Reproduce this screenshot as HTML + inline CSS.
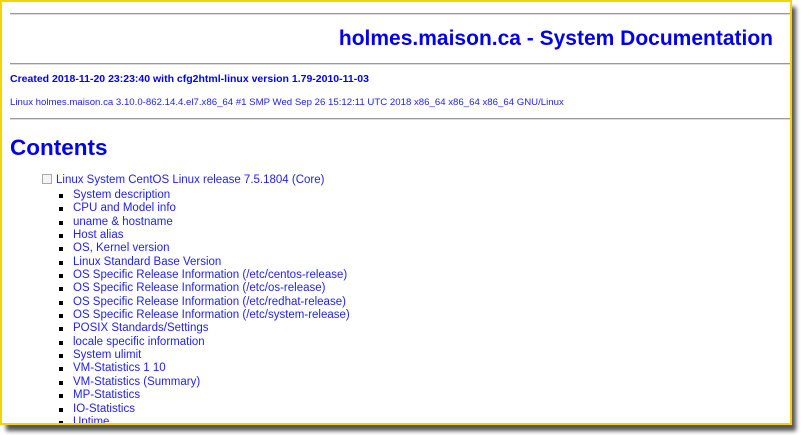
<!DOCTYPE html>
<html><head><style>
html,body{margin:0;padding:0;width:801px;height:435px;overflow:hidden;background:#fff;font-family:"Liberation Sans",Arial,sans-serif;}
#shadow{position:absolute;left:6px;top:7px;width:790px;height:424px;background:#555;filter:blur(2px);}
#frame{position:absolute;left:0;top:0;width:788px;height:421px;border:2px solid #f5d400;background:#fff;overflow:hidden;}
.hr{position:absolute;left:8px;right:0;height:0;border-top:1px solid #999;border-bottom:1px solid #ddd;}
.t{position:absolute;color:#0000ee;white-space:nowrap;}
ul{margin:0;padding:0;list-style:none;}
li{position:relative;height:13.35px;line-height:13.35px;font-size:11.5px;color:#2222ee;}
li:before{content:"";position:absolute;left:-14px;top:5px;width:4px;height:4px;background:#000;}
</style></head><body>
<div id="shadow"></div>
<div id="frame">
<div class="hr" style="top:11px"></div>
<div class="t" style="right:17px;top:25px;font-size:21px;font-weight:bold;">holmes.maison.ca - System Documentation</div>
<div class="hr" style="top:61px"></div>
<div class="t" style="left:8px;top:71px;font-size:10.5px;font-weight:bold;">Created 2018-11-20 23:23:40 with cfg2html-linux version 1.79-2010-11-03</div>
<div class="t" style="left:8px;top:95px;font-size:9.65px;color:#2222ee;">Linux holmes.maison.ca 3.10.0-862.14.4.el7.x86_64 #1 SMP Wed Sep 26 15:12:11 UTC 2018 x86_64 x86_64 x86_64 GNU/Linux</div>
<div class="hr" style="top:116px"></div>
<div class="t" style="left:8px;top:133px;font-size:22.5px;font-weight:bold;">Contents</div>
<div style="position:absolute;left:40px;top:172px;width:8px;height:8px;border:1px solid #aaa;background:#f4f4f4;"></div>
<div class="t" style="left:54px;top:172px;font-size:11.5px;color:#2222ee;">Linux System CentOS Linux release 7.5.1804 (Core)</div>
<ul style="position:absolute;left:71px;top:187px;">
<li>System description</li><li>CPU and Model info</li><li>uname &amp; hostname</li><li>Host alias</li><li>OS, Kernel version</li><li>Linux Standard Base Version</li><li>OS Specific Release Information (/etc/centos-release)</li><li>OS Specific Release Information (/etc/os-release)</li><li>OS Specific Release Information (/etc/redhat-release)</li><li>OS Specific Release Information (/etc/system-release)</li><li>POSIX Standards/Settings</li><li>locale specific information</li><li>System ulimit</li><li>VM-Statistics 1 10</li><li>VM-Statistics (Summary)</li><li>MP-Statistics</li><li>IO-Statistics</li><li>Uptime</li>
</ul>
</div>
</body></html>
